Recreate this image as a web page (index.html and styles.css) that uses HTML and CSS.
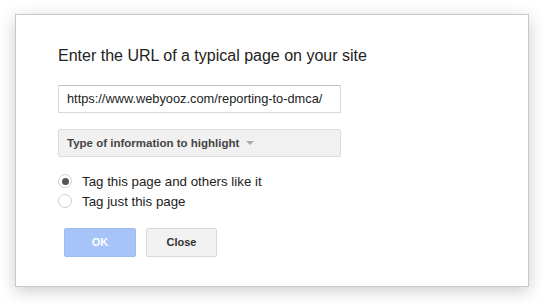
FILE: index.html
```html
<!DOCTYPE html>
<html lang="en">
<head>
    <meta charset="UTF-8">
    <title>Tag page</title>
    <link rel="stylesheet" href="styles.css">
</head>
<body>
    <div class="dialog">
        <div class="title">Enter the URL of a typical page on your site</div>
        <div class="urlBox">https://www.webyooz.com/reporting-to-dmca/</div>
        <div class="dropdown">
            <span>Type of information to highlight</span>
            <span class="arrow"></span>
        </div>
        <div class="choices">
            <div class="choice">
                <span class="radio checked"></span>
                <span>Tag this page and others like it</span>
            </div>
            <div class="choice">
                <span class="radio"></span>
                <span>Tag just this page</span>
            </div>
        </div>
        <div class="buttons">
            <div class="btn ok">OK</div>
            <div class="btn close">Close</div>
        </div>
    </div>
</body>
</html>
```
FILE: styles.css
```css
*{
    padding: 0px;
    margin: 0px;
    box-sizing: border-box;
}
html,body{
    min-height: 304px;
}
body{
    background: #fff;
    font-family: "Liberation Sans", Arial, sans-serif;
    color: #222;
    padding: 14px 0 0 15px;
}
.dialog{
    width: 514px;
    height: 273px;
    border: 1px solid #c8c8c8;
    background: #fff;
    box-shadow: 0 4px 16px rgba(0,0,0,0.2);
    padding: 31px 0 0 42px;
}
.title{
    font-size: 16px;
    line-height: 20px;
    color: #222;
}
.urlBox{
    width: 283px;
    height: 28px;
    margin-top: 19px;
    border: 1px solid #d9d9d9;
    border-top-color: #c0c0c0;
    padding-left: 8px;
    font-size: 12.8px;
    line-height: 26px;
    color: #222;
}
.dropdown{
    width: 283px;
    height: 28px;
    margin-top: 16px;
    border: 1px solid #dcdcdc;
    border-radius: 2px;
    background: #f1f1f1;
    padding-left: 8px;
    font-size: 11.5px;
    font-weight: bold;
    line-height: 26px;
    color: #444;
    display: flex;
    align-items: center;
    gap: 7px;
}
.arrow{
    width: 0;
    height: 0;
    border-left: 4px solid transparent;
    border-right: 4px solid transparent;
    border-top: 4px solid #aaa;
}
.choices{
    margin-top: 14px;
}
.choice{
    display: flex;
    align-items: center;
    height: 20px;
    font-size: 13.3px;
    color: #222;
    gap: 10px;
}
.radio{
    width: 14px;
    height: 14px;
    border-radius: 50%;
    border: 1px solid #d0d0d0;
    background: #fff;
    display: flex;
    align-items: center;
    justify-content: center;
}
.radio.checked::after{
    content: "";
    width: 7px;
    height: 7px;
    border-radius: 50%;
    background: #555;
}
.buttons{
    display: flex;
    gap: 10px;
    margin-top: 17px;
    padding-left: 6px;
}
.btn{
    height: 29px;
    border-radius: 2px;
    font-size: 11px;
    font-weight: bold;
    line-height: 27px;
    text-align: center;
}
.ok{
    width: 72px;
    background: #a6c4f8;
    border: 1px solid #9dbcf5;
    color: #fff;
}
.close{
    width: 71px;
    background: #f2f2f2;
    border: 1px solid #d8d8d8;
    color: #333;
}
```
